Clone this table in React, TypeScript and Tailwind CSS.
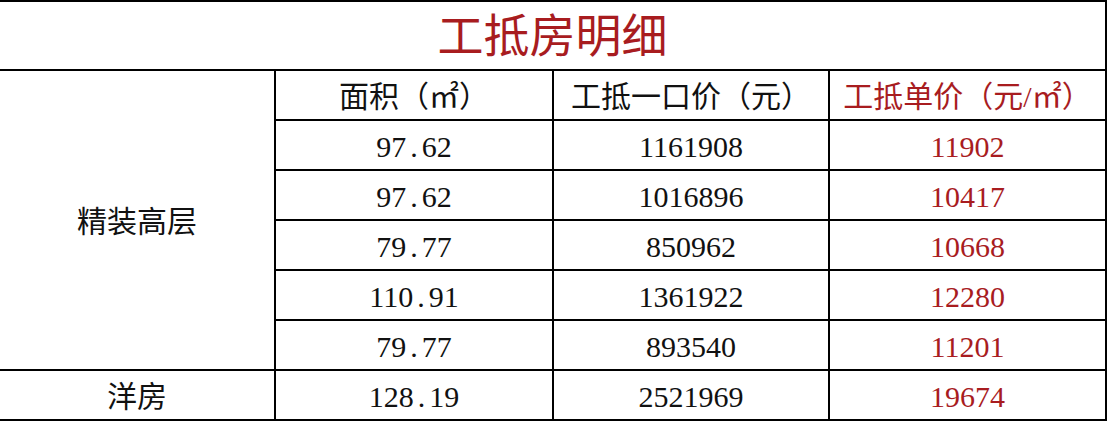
const rows = [
  { area: "97.62", total: "1161908", unit: "11902" },
  { area: "97.62", total: "1016896", unit: "10417" },
  { area: "79.77", total: "850962", unit: "10668" },
  { area: "110.91", total: "1361922", unit: "12280" },
  { area: "79.77", total: "893540", unit: "11201" },
];

const cell = "flex items-center justify-center border-r-2 border-b-2 border-black pt-[3px]";

// the source sheet uses a wide full-stop, so give the dot some room
function Area({ v }: { v: string }) {
  const [a, b] = v.split(".");
  return (
    <span>
      {a}
      <span className="mx-[4px]">.</span>
      {b}
    </span>
  );
}

export default function App() {
  return (
    <div className="w-[1109px] h-[423px] bg-white overflow-hidden">
      <div
        className="grid w-[1107px] grid-cols-[276px_278px_276px_277px] grid-rows-[69px_repeat(7,50px)] border-t-2 border-black text-[30px] leading-none text-[#111]"
        style={{ fontFamily: '"Liberation Serif", "Noto Sans CJK SC", serif' }}
      >
        {/* title */}
        <div className={`${cell} col-span-4 text-[46px] text-[#a81c1f]`}>工抵房明细</div>

        {/* merged group cell */}
        <div className={`${cell} row-span-6`}>精装高层</div>

        {/* header */}
        <div className={cell}>面积（㎡）</div>
        <div className={cell}>工抵一口价（元）</div>
        <div className={`${cell} text-[#a81c1f]`}>工抵单价（元/㎡）</div>

        {rows.map((r, i) => (
          <div key={i} className="contents">
            <div className={cell}>
              <Area v={r.area} />
            </div>
            <div className={cell}>{r.total}</div>
            <div className={`${cell} text-[#a81c1f]`}>{r.unit}</div>
          </div>
        ))}

        <div className={cell}>洋房</div>
        <div className={cell}>
          <Area v="128.19" />
        </div>
        <div className={cell}>2521969</div>
        <div className={`${cell} text-[#a81c1f]`}>19674</div>
      </div>
    </div>
  );
}
